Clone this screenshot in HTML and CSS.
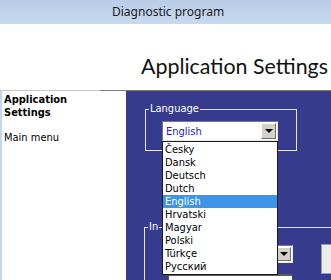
FILE: index.html
```html
<!DOCTYPE html>
<html lang="en">
<head>
  <meta charset="UTF-8" />
  <title>Diagnostic program</title>
  <meta name="viewport" content="width=device-width, initial-scale=1.0">
  <link rel="stylesheet" href="styles.css">
</head>
<body>
  <div class="titlebar">Diagnostic program</div>

  <div class="header">
    <h1>Application Settings</h1>
  </div>
  <div class="divider"></div>

  <div class="main">
    <aside class="sidebar">
      <div class="side-title">Application Settings</div>
      <div class="side-link">Main menu</div>
    </aside>

    <section class="panel">
      <fieldset class="group lang">
        <legend>Language</legend>
        <div class="combo">
          <span class="combo-text">English</span>
          <span class="combo-btn"><i class="arrow"></i></span>
          <ul class="droplist">
            <li>Česky</li>
            <li>Dansk</li>
            <li>Deutsch</li>
            <li>Dutch</li>
            <li class="selected">English</li>
            <li>Hrvatski</li>
            <li>Magyar</li>
            <li>Polski</li>
            <li>Türkçe</li>
            <li>Русский</li>
          </ul>
        </div>
      </fieldset>

      <!-- second group is mostly hidden by the open list -->
      <fieldset class="group iface">
        <legend>In</legend>
        <div class="iface-grid">
          <div class="combo combo-small">
            <span class="combo-text"></span>
            <span class="combo-btn"><i class="arrow"></i></span>
          </div>
          <button class="btn"></button>
          <div class="field"></div>
        </div>
      </fieldset>
    </section>
  </div>
</body>
</html>
```

FILE: styles.css
```css
:root {
  --panel-blue: #363b8d;
  --face: #d4d0c8;
  --ui-font: "DejaVu Sans Condensed", "DejaVu Sans", sans-serif;
  --title-font: "Noto Sans", "Open Sans", sans-serif;
}

html, body {
  margin: 0;
  height: 100%;
  overflow: hidden;
  background: white;
}

body {
  font-family: var(--ui-font);
  font-size: 11px;
  color: #000;
}

.titlebar {
  height: 24px;
  line-height: 24px;
  padding-left: 112px;
  font-family: var(--title-font);
  font-size: 12px;
  color: #1a1a1a;
  background: linear-gradient(to bottom, #bacde8, #c8d9ef);
}

.header {
  height: 66px;
  background: #fff;
}

.header h1 {
  margin: 0;
  padding: 29px 0 0 141px;
  font-family: Lato, "Noto Sans", sans-serif;
  font-weight: normal;
  font-size: 21.4px;
  line-height: 26px;
  color: #111;
  white-space: nowrap;
}

.divider {
  height: 1px;
  background: linear-gradient(to right, #c9c9c9 100px, #7d7d7d 100px);
}

.main {
  display: flex;
  height: 200px;
}

.sidebar {
  flex: none;
  width: 126px;
  border-left: 2px solid #c6d6ee;
  padding: 2px 0 0 2px;
  box-sizing: border-box;
  line-height: 13px;
}

.side-title {
  font-weight: bold;
  width: 90px;
}

.side-link {
  margin-top: 12px;
}

.panel {
  flex: 1;
  background: var(--panel-blue);
  padding: 12px 0 0 19px;
  overflow: hidden;
}

.group {
  margin: 0;
  padding: 0 0 9px 3px;
  border: 1px solid #e6e6ee;
  box-sizing: border-box;
  min-width: 0;
}

.group legend {
  padding: 0 1px;
  color: #fff;
  line-height: 12px;
}

.lang {
  width: 152px;
  position: relative;
  z-index: 2;
}

.iface {
  width: 220px;
  margin: 70px 0 0 -1px;
  height: 80px;
}

.combo {
  position: relative;
  display: flex;
  align-items: center;
  width: 116px;
  height: 20px;
  margin: 6px 0 0 13px;
  background: #fff;
  border: 1px solid;
  border-color: #7a7a7a #e8e8e8 #e8e8e8 #7a7a7a;
  box-sizing: border-box;
}

.combo-text {
  flex: 1;
  padding-left: 3px;
  color: #2323c8;
}

.combo-btn {
  width: 15px;
  height: 16px;
  margin-right: 1px;
  background: var(--face);
  border: 1px solid;
  border-color: #fff #6f6f6f #6f6f6f #fff;
  box-sizing: border-box;
  display: flex;
  align-items: center;
  justify-content: center;
}

.arrow {
  width: 0;
  height: 0;
  border-left: 4px solid transparent;
  border-right: 4px solid transparent;
  border-top: 4px solid #000;
}

.droplist {
  position: absolute;
  left: -1px;
  top: 19px;
  width: 116px;
  margin: 0;
  padding: 1px 0;
  list-style: none;
  background: #fff;
  border: 1px solid #1c1c1c;
  box-sizing: border-box;
}

.droplist li {
  height: 13px;
  line-height: 13px;
  padding-left: 2px;
  white-space: nowrap;
}

.droplist li.selected {
  background: #3d95ea;
  color: #fff;
}

.iface-grid {
  display: grid;
  grid-template-columns: 131px 40px;
  grid-template-rows: 18px auto;
  column-gap: 28px;
  row-gap: 11px;
  margin: 12px 0 0 14px;
}

.combo-small {
  grid-column: 1;
  grid-row: 1;
  width: 131px;
  height: 18px;
  margin: 0;
}

.combo-small .combo-btn {
  height: 14px;
}

.btn {
  grid-column: 2;
  grid-row: 1 / span 2;
  width: 40px;
  height: 30px;
  margin-top: -1px;
  background: #ececec;
  border: 1px solid #9a9a9a;
  padding: 0;
}

.field {
  grid-column: 1;
  grid-row: 2;
  width: 124px;
  height: 20px;
  margin-left: 6px;
  background: #fff;
  border-top: 2px solid #5a5a5a;
  border-left: 1px solid #5a5a5a;
  box-sizing: border-box;
}
```
